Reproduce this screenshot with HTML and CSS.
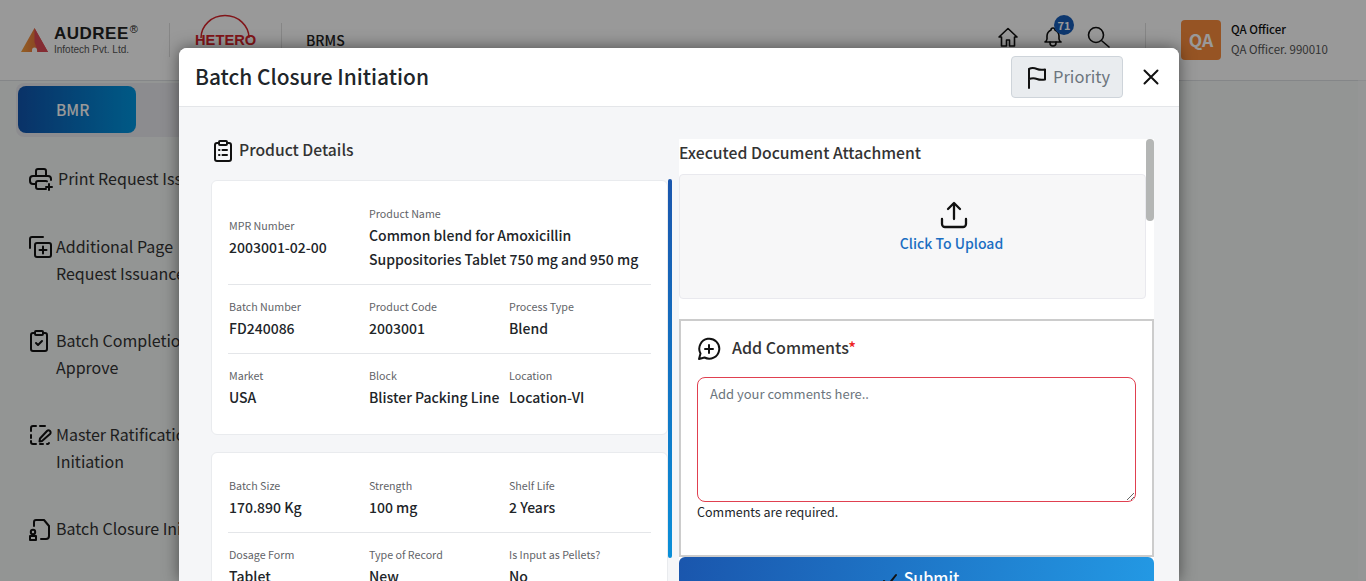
FILE: index.html
```html
<!DOCTYPE html>
<html lang="en">
<head>
  <meta charset="UTF-8" />
  <meta name="viewport" content="width=device-width, initial-scale=1" />
  <title>Batch Closure Initiation</title>
  <link rel="stylesheet" href="styles.css">
</head>
<body>

  <header class="topbar">
    <div class="brand">
      <svg class="brand-mark" width="27" height="24" viewBox="0 0 27 24" aria-hidden="true">
        <defs>
          <linearGradient id="mark" x1="0" y1="0" x2="1" y2="0">
            <stop offset="0" stop-color="#f5a13c" />
            <stop offset="0.5" stop-color="#ea7a3c" />
            <stop offset="1" stop-color="#dd4a55" />
          </linearGradient>
        </defs>
        <path d="M13.500 0 27 24H0Z" fill="url(#mark)" />
        <path d="M13.500 0 27 24H17L13.500 14Z" fill="#dd4a55" />
        <path d="M11 24v-2a2.500 2.500 0 0 1 5 0v2z" fill="#fff" />
      </svg>
      <div class="brand-text">
        <div class="brand-name">AUDREE<sup>®</sup></div>
        <div class="brand-sub">Infotech Pvt. Ltd.</div>
      </div>
    </div>
    <div class="vline"></div>
    <div class="client">
      <svg class="client-arc" width="58" height="25" viewBox="0 0 58 25" aria-hidden="true">
        <path d="M6 24A24 22.500 0 0 1 54 24" fill="none" stroke="#d8232a" stroke-width="1.500" />
      </svg>
      <span class="client-name">HETERO</span>
    </div>
    <div class="vline"></div>
    <div class="app-name">BRMS</div>

    <div class="top-actions">
      <svg class="ico" width="24" height="24" viewBox="0 0 24 24" aria-hidden="true">
        <path d="M3 12 12 3.500 21 12h-2.500v9h-5v-6h-3v6h-5v-9z" />
      </svg>
      <div class="bell">
        <svg class="ico" width="24" height="24" viewBox="0 0 24 24" aria-hidden="true">
          <path d="M10 5a2 2 0 1 1 4 0 7 7 0 0 1 4 6v3a4 4 0 0 0 2 3H4a4 4 0 0 0 2-3v-3a7 7 0 0 1 4-6" />
          <path d="M9 17v1a3 3 0 0 0 6 0v-1" />
        </svg>
        <span class="badge">71</span>
      </div>
      <svg class="ico" width="24" height="24" viewBox="0 0 24 24" aria-hidden="true">
        <circle cx="10" cy="10" r="7.500" />
        <path d="m16 16 7 6" />
      </svg>
    </div>
    <div class="vline vline-user"></div>
    <div class="avatar">QA</div>
    <div class="user">
      <div class="user-name">QA Officer</div>
      <div class="user-role">QA Officer. 990010</div>
    </div>
  </header>

  <div class="tabs">
    <div class="tab-active">BMR</div>
  </div>

  <nav class="sidebar">
    <div class="nav-item nav-print">
      <svg class="ico" width="24" height="24" viewBox="0 0 24 24" aria-hidden="true">
        <path d="M7 17H4a3 3 0 0 1-3-3v-2a3 3 0 0 1 3-3h15a3 3 0 0 1 3 3v1" />
        <path d="M17 9V4a2 2 0 0 0-2-2H9a2 2 0 0 0-2 2v5" />
        <path d="M17 22H9a2 2 0 0 1-2-2v-4a2 2 0 0 1 2-2h8a2 2 0 0 1 1 .3" />
        <path d="M20 17v6M17 20h6" />
      </svg>
      <span>Print Request Issuance</span>
    </div>
    <div class="nav-item">
      <svg class="ico" width="24" height="24" viewBox="0 0 24 24" aria-hidden="true">
        <rect x="6" y="8" width="16" height="14" rx="2" />
        <path d="M1 13V4a2 2 0 0 1 2-2h11" />
        <path d="M14 11.500v7M10.500 15h7" />
      </svg>
      <span>Additional Page<br>Request Issuance</span>
    </div>
    <div class="nav-item">
      <svg class="ico" width="24" height="24" viewBox="2 0 24 24" aria-hidden="true">
        <path d="M8 4H6a2 2 0 0 0-2 2v14a2 2 0 0 0 2 2h12a2 2 0 0 0 2-2V6a2 2 0 0 0-2-2h-2" />
        <rect x="8" y="2" width="8" height="4" rx="1" />
        <path d="m9 14 2 2 4-4" />
      </svg>
      <span>Batch Completion<br>Approve</span>
    </div>
    <div class="nav-item">
      <svg class="ico" width="24" height="24" viewBox="0 0 24 24" aria-hidden="true">
        <path d="M2 8V5a2 2 0 0 1 2-2h3M11 3h5M2 12v3M2 18v1a2 2 0 0 0 2 2h3M11 21h3M18 21a2 2 0 0 0 2-1" />
        <path d="M13 18l-2.500.500.500-3 7-7.500a2 2 0 0 1 3 3z" />
      </svg>
      <span>Master Ratification<br>Initiation</span>
    </div>
    <div class="nav-item">
      <svg class="ico" width="24" height="24" viewBox="0 0 24 24" aria-hidden="true">
        <path d="M5 9V5a2 2 0 0 1 2-2h8l5 6v10a3 3 0 0 1-3 3h-5" />
        <circle cx="4" cy="15" r="2.200" />
        <path d="M1 23v-4h6v4z" />
      </svg>
      <span>Batch Closure Initiation</span>
    </div>
  </nav>

  <div class="page-thumb"></div>

  <div class="backdrop">
    <div class="modal">
      <div class="modal-head">
        <h1>Batch Closure Initiation</h1>
        <button class="priority" type="button">
          <svg class="ico" width="22" height="24" viewBox="0 0 22 24" aria-hidden="true">
            <path d="M3 23V4c3-1.500 5.500-1 8 0s5 1 8 .500v10c-3 .500-5.500 .500-8-.500s-5-1-8 0" />
          </svg>
          <span>Priority</span>
        </button>
        <svg class="close ico" width="16" height="16" viewBox="0 0 16 16" aria-hidden="true">
          <path d="m1.500 1.500 13 13M14.500 1.500l-13 13" />
        </svg>
      </div>

      <div class="modal-body">
        <section class="details">
          <h2 class="details-title">
            <svg class="ico" width="24" height="24" viewBox="0 0 24 24" aria-hidden="true">
              <path d="M8 4H6a2 2 0 0 0-2 2v14a2 2 0 0 0 2 2h12a2 2 0 0 0 2-2V6a2 2 0 0 0-2-2h-2" />
              <rect x="8" y="2" width="8" height="4" rx="1" />
              <path d="M11.500 11H16M11.500 16H16M8 11h.500M8 16h.500" />
            </svg>
            <span>Product Details</span>
          </h2>
          <div class="cards-wrap">
            <div class="cards">
              <div class="card">
                <div class="row row-mid">
                  <div><label>MPR Number</label><p>2003001-02-00</p></div>
                  <div class="span-2"><label>Product Name</label><p>Common blend for Amoxicillin Suppositories Tablet 750 mg and 950 mg</p></div>
                </div>
                <div class="row">
                  <div><label>Batch Number</label><p>FD240086</p></div>
                  <div><label>Product Code</label><p>2003001</p></div>
                  <div><label>Process Type</label><p>Blend</p></div>
                </div>
                <div class="row">
                  <div><label>Market</label><p>USA</p></div>
                  <div><label>Block</label><p>Blister Packing Line</p></div>
                  <div><label>Location</label><p>Location-VI</p></div>
                </div>
              </div>
              <div class="card">
                <div class="row">
                  <div><label>Batch Size</label><p>170.890 Kg</p></div>
                  <div><label>Strength</label><p>100 mg</p></div>
                  <div><label>Shelf Life</label><p>2 Years</p></div>
                </div>
                <div class="row">
                  <div><label>Dosage Form</label><p>Tablet</p></div>
                  <div><label>Type of Record</label><p>New</p></div>
                  <div><label>Is Input as Pellets?</label><p>No</p></div>
                </div>
              </div>
            </div>
            <div class="cards-thumb"></div>
          </div>
        </section>

        <section class="side">
          <div class="side-thumb"></div>
          <h2 class="side-title">Executed Document Attachment</h2>
          <div class="upload">
            <svg class="ico" width="28" height="28" viewBox="0 0 28 28" aria-hidden="true">
              <path d="M14 18V2.500M8 8l6-6 6 6" />
              <path d="M2 18v5a3 3 0 0 0 3 3h18a3 3 0 0 0 3-3v-5" />
            </svg>
            <span>Click To Upload</span>
          </div>
          <div class="comments">
            <h3>
              <svg class="ico" width="24" height="24" viewBox="0 0 24 24" aria-hidden="true">
                <path d="M2 22l1.500-5.500A10 10 0 1 1 7.500 20.500z" />
                <path d="M12 8v8M8 12h8" />
              </svg>
              <span>Add Comments<em>*</em></span>
            </h3>
            <textarea placeholder="Add your comments here.."></textarea>
            <div class="error">Comments are required.</div>
          </div>
          <button class="submit" type="button">
            <svg class="ico" width="14" height="14" viewBox="0 0 14 14" aria-hidden="true">
              <path d="m1 8 4 4 8-10" />
            </svg>
            <span>Submit</span>
          </button>
        </section>
      </div>
    </div>
  </div>

</body>
</html>
```

FILE: styles.css
```css
* {
  box-sizing: border-box;
}

html, body {
  height: 100%;
  overflow: hidden;
}

body {
  margin: 0;
  background: #f5f8f7;
  color: #212529;
  font-family: "Noto Sans CJK JP", "Noto Sans", sans-serif;
}

.ico {
  fill: none;
  stroke: #111;
  stroke-width: 2;
  stroke-linecap: round;
  stroke-linejoin: round;
  flex: none;
}

/* top bar */
.topbar {
  height: 81px;
  background: #fff;
  border-bottom: 1px solid #dde0e3;
  display: flex;
  align-items: center;
  padding-left: 21px;
}

.brand {
  display: flex;
  align-items: center;
  gap: 6px;
  width: 148px;
}

.brand-text {
  margin-top: -1px;
}

.brand-name {
  font-size: 17px;
  line-height: 20px;
  font-weight: 700;
  color: #222;
  letter-spacing: 0.5px;
  font-family: "Liberation Sans", sans-serif;
}

.brand-name sup {
  margin-left: 1px;
  font-size: 11px;
  font-weight: 400;
  line-height: 0;
  vertical-align: 6px;
}

.brand-sub {
  font-family: "Liberation Sans", sans-serif;
  font-size: 10px;
  line-height: 12px;
  color: #555;
}

.vline {
  width: 1px;
  height: 34px;
  background: #e0e0e0;
}

.client {
  width: 111px;
  height: 48px;
  position: relative;
}

.client-arc {
  position: absolute;
  left: 25px;
  top: -2px;
}

.client-name {
  position: absolute;
  left: 25px;
  top: 16px;
  color: #d8232a;
  font-family: "Liberation Sans", sans-serif;
  font-weight: 700;
  font-size: 14.700px;
}

.app-name {
  margin-left: 24px;
  font-size: 14px;
  font-weight: 500;
  color: #222;
}

.top-actions {
  margin-left: auto;
  margin-bottom: 6px;
  display: flex;
  align-items: center;
  gap: 21px;
}

.top-actions .ico {
  stroke-width: 1.600;
}

.bell {
  position: relative;
  height: 24px;
}

.badge {
  position: absolute;
  left: 13px;
  top: -10px;
  width: 20px;
  height: 20px;
  border-radius: 50%;
  background: #175cb8;
  color: #fff;
  font-size: 11px;
  font-weight: 700;
  line-height: 20px;
  text-align: center;
}

.vline-user {
  margin-left: 35px;
  margin-right: 35px;
}

.avatar {
  width: 40px;
  height: 40px;
  border-radius: 4px;
  background: #fb8c3c;
  color: #fff;
  font-size: 17.500px;
  font-weight: 700;
  line-height: 40px;
  text-align: center;
}

.user {
  margin: -2px 0 0 10px;
  width: 135px;
  font-size: 11.500px;
  line-height: 20px;
}

.user-name {
  font-weight: 500;
  color: #111;
}

.user-role {
  color: #555;
}

/* tab strip and left menu */
.tabs {
  margin: 2px 0 0 16px;
  width: 320px;
  height: 54px;
  padding: 3px 2px;
  background: #eaeaef;
  border-radius: 8px;
}

.tab-active {
  width: 118px;
  height: 47px;
  padding-left: 38px;
  border-radius: 8px;
  background: linear-gradient(90deg, #1054ad, #0096e0);
  color: #fff;
  font-size: 15.500px;
  font-weight: 500;
  line-height: 47px;
}

.sidebar {
  padding: 28px 0 0 29px;
  display: flex;
  flex-direction: column;
  gap: 40px;
}

.nav-item {
  display: flex;
  align-items: flex-start;
  gap: 3px;
  font-size: 16px;
  line-height: 27px;
  color: #333;
  white-space: nowrap;
}

.nav-print {
  gap: 5px;
  margin-bottom: 1px;
}

.nav-item .ico {
  margin-top: 2px;
}

.page-thumb {
  position: absolute;
  right: 0;
  top: 62px;
  width: 8px;
  height: 519px;
  border-radius: 4px;
  background: #fff;
  opacity: 0.4;
}

/* modal */
.backdrop {
  position: absolute;
  inset: 0;
  overflow: hidden;
  background: rgba(0, 0, 0, 0.4);
}

.modal {
  width: 1000px;
  height: calc(100% - 48px);
  margin: 48px 0 0 179px;
  background: #f5f6f8;
  border-radius: 8px 8px 0 0;
  box-shadow: 0 0 16px rgba(0, 0, 0, 0.5);
  overflow: hidden;
}

.modal-head {
  height: 59px;
  padding: 0 20px 0 16px;
  background: #fff;
  border-bottom: 1px solid #e4e6e9;
  display: flex;
  align-items: center;
}

.modal-head h1 {
  margin: 0 0 2px;
  font-size: 20.900px;
  font-weight: 500;
  color: #212529;
}

.priority {
  margin-left: auto;
  width: 112px;
  height: 42px;
  padding: 0 0 0 14px;
  display: flex;
  align-items: center;
  gap: 5px;
  background: #e9ecef;
  border: 1px solid #ced4da;
  border-radius: 4px;
  color: #6c757d;
  font-family: inherit;
  font-size: 16.500px;
}

.priority span {
  margin-bottom: 2px;
}

.close {
  margin-left: 20px;
}

.modal-body {
  height: calc(100% - 59px);
  overflow: hidden;
  padding: 32px 25px 0 32px;
  display: flex;
  gap: 7px;
}

.details {
  width: 461px;
}

.details-title {
  margin: 0 0 17px;
  height: 24px;
  display: flex;
  align-items: center;
  gap: 4px;
  font-size: 15.700px;
  font-weight: 500;
  color: #333;
}

.details-title span {
  margin-bottom: 4px;
}

.cards-wrap {
  display: flex;
}

.cards {
  width: 457px;
  display: flex;
  flex-direction: column;
  gap: 17px;
}

.cards-thumb {
  width: 4px;
  height: 379px;
  margin-top: -1px;
  border-radius: 2px;
  background: linear-gradient(180deg, #1a56ad, #0a8fd8);
}

.card {
  background: #fff;
  border: 1px solid #e9ebee;
  border-radius: 6px;
  padding: 11px 16px 12px;
}

.row {
  display: grid;
  grid-template-columns: 140px 140px 143px;
  padding: 12px 0 12px 1px;
  border-bottom: 1px solid #e4e6e9;
}

.row:last-child {
  border-bottom: none;
}

.row-mid {
  align-items: center;
}

.span-2 {
  grid-column: span 2;
}

.row label {
  display: block;
  font-size: 10.700px;
  line-height: 20px;
  color: #5f6368;
}

.row p {
  margin: -1px 0 1px;
  font-size: 14px;
  line-height: 24px;
  font-weight: 500;
  color: #212529;
}

.side {
  position: relative;
  width: 475px;
  background: #fff;
}

.side-thumb {
  position: absolute;
  right: 0;
  top: 0;
  width: 8px;
  height: 82px;
  border-radius: 4px;
  background: #b4b6b5;
}

.side-title {
  margin: 0;
  height: 35px;
  font-size: 15.750px;
  line-height: 28px;
  font-weight: 500;
  color: #333;
}

.upload {
  width: 467px;
  height: 125px;
  padding: 26px 0 0 78px;
  display: flex;
  flex-direction: column;
  align-items: center;
  gap: 4px;
  background: #f7f7f8;
  border: 1px solid #e9e9ee;
  border-radius: 4px;
  font-size: 14px;
  font-weight: 500;
  color: #1b6ec2;
}

.upload .ico {
  margin-left: 4px;
  stroke-width: 2.300;
}

.comments {
  height: 238px;
  margin-top: 20px;
  padding: 16px 16px 0;
  border: 2px solid #ccc;
}

.comments h3 {
  margin: 0 0 16px;
  height: 24px;
  display: flex;
  align-items: center;
  gap: 11px;
  font-size: 16px;
  font-weight: 500;
  color: #333;
}

.comments h3 span {
  margin-bottom: 4px;
}

.comments em {
  color: #e22;
  font-style: normal;
}

.comments textarea {
  display: block;
  width: 439px;
  height: 125px;
  padding: 5px 12px;
  border: 1px solid #e04050;
  border-radius: 8px;
  outline: none;
  font-family: inherit;
  font-size: 13px;
  line-height: 21px;
}

.comments textarea::placeholder {
  color: #6c757d;
}

.error {
  font-size: 12.500px;
  line-height: 20px;
  color: #212529;
}

.submit {
  width: 475px;
  height: 48px;
  padding: 8px 0 0 9px;
  display: flex;
  justify-content: center;
  gap: 7px;
  align-items: flex-start;
  border: none;
  border-radius: 6px;
  background: linear-gradient(100deg, #1a56ad, #2399e4);
  color: #fff;
  font-family: inherit;
  font-size: 16px;
  font-weight: 500;
}

.submit .ico {
  margin-top: 8px;
}
```
